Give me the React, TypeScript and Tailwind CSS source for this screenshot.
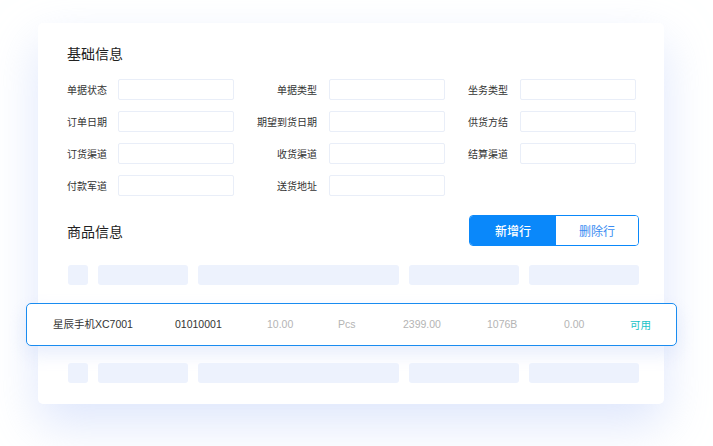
import React from "react";

const font = {
  fontFamily: '"Noto Sans CJK SC", "Noto Sans", "Liberation Sans", sans-serif',
};
const latin = {
  fontFamily: '"Liberation Sans", "Noto Sans CJK SC", sans-serif',
};

const rows: string[][] = [
  ["单据状态", "单据类型", "坐务类型"],
  ["订单日期", "期望到货日期", "供货方结"],
  ["订货渠道", "收货渠道", "结算渠道"],
  ["付款军道", "送货地址"],
];

function Placeholder() {
  return (
    <div className="flex gap-[10px] pl-px h-[20px]">
      <div className="w-[20px] rounded-[3px] bg-[#edf2fd]" />
      <div className="w-[90px] rounded-[3px] bg-[#edf2fd]" />
      <div className="w-[201px] rounded-[3px] bg-[#edf2fd]" />
      <div className="w-[110px] rounded-[3px] bg-[#edf2fd]" />
      <div className="w-[110px] rounded-[3px] bg-[#edf2fd]" />
    </div>
  );
}

export default function App() {
  return (
    <div className="w-[713px] h-[446px] bg-white overflow-hidden" style={font}>
      <div className="pt-[23px] pl-[38px]">
        <div className="w-[626px] bg-white rounded-[5px] shadow-[0_20px_48px_rgba(200,214,250,0.6)] pl-[29px] pr-[25px] pt-[20px] pb-[21px]">
          <div className="text-[14px] leading-[20px] text-[#222]">基础信息</div>
          <div className="mt-[16px] flex flex-col gap-[11px]">
            {rows.map((r, i) => (
              <div
                key={i}
                className="grid grid-cols-[51px_116px_95px_116px_75px_116px] items-center"
              >
                {r.map((label, j) => (
                  <React.Fragment key={j}>
                    <div
                      className={
                        "text-[10px] leading-[14px] text-[#333] whitespace-nowrap pr-[12px] " +
                        (j === 0 ? "text-left" : "text-right")
                      }
                    >
                      {label}
                    </div>
                    <div className="h-[21px] rounded-[2px] border border-[#e9eef8] bg-white" />
                  </React.Fragment>
                ))}
              </div>
            ))}
          </div>
          <div className="mt-[19px] flex items-center justify-between">
            <div className="text-[14px] leading-[20px] text-[#222]">商品信息</div>
            <div className="flex h-[31px] w-[170px] rounded-[4px] border border-[#0a88fa] overflow-hidden">
              <div className="w-[86px] bg-[#0a88fa] text-white text-[12px] font-medium flex items-center justify-center">
                新增行
              </div>
              <div className="flex-1 bg-white text-[#3a8cf2] text-[12px] flex items-center justify-center">
                删除行
              </div>
            </div>
          </div>
          <div className="mt-[19px]">
            <Placeholder />
          </div>
          <div
            className="mt-[18px] ml-[-41px] mr-[-38px] h-[43px] rounded-[5px] border border-[#1a8cf0] bg-white shadow-[0_8px_18px_rgba(215,225,250,0.6)] flex items-center text-[10.5px] whitespace-nowrap"
            style={latin}
          >
            <div className="pl-[26px] w-[148px] text-[#333]">星辰手机XC7001</div>
            <div className="w-[92px] text-[#333]">01010001</div>
            <div className="w-[71px] text-[#b4b4b4]">10.00</div>
            <div className="w-[65px] text-[#b4b4b4]">Pcs</div>
            <div className="w-[84px] text-[#b4b4b4]">2399.00</div>
            <div className="w-[77px] text-[#b4b4b4]">1076B</div>
            <div className="w-[66px] text-[#b4b4b4]">0.00</div>
            <div className="text-[#17c3c8]" style={font}>可用</div>
          </div>
          <div className="mt-[17px]">
            <Placeholder />
          </div>
        </div>
      </div>
    </div>
  );
}
